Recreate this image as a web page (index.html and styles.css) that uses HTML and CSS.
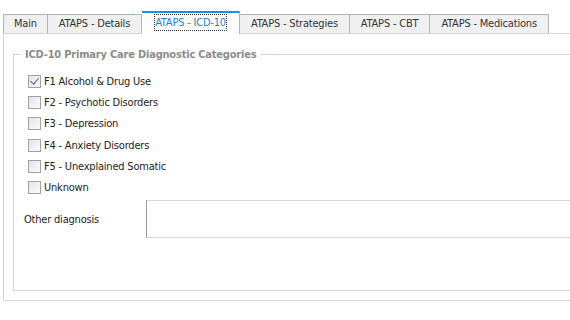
FILE: index.html
```html
<!DOCTYPE html>
<html lang="en">
<head>
    <meta charset="UTF-8">
    <title>ATAPS - ICD-10</title>
    <link rel="stylesheet" href="styles.css">
</head>
<body>
    <div class="tabs">
        <div class="tab">Main</div>
        <div class="tab">ATAPS - Details</div>
        <div class="tab active"><span class="focus">ATAPS - ICD-10</span></div>
        <div class="tab">ATAPS - Strategies</div>
        <div class="tab">ATAPS - CBT</div>
        <div class="tab">ATAPS - Medications</div>
    </div>

    <div class="panel">
        <fieldset class="group">
            <legend>ICD-10 Primary Care Diagnostic Categories</legend>

            <div class="checks">
                <label class="check"><input type="checkbox" checked> F1 Alcohol &amp; Drug Use</label>
                <label class="check"><input type="checkbox"> F2 - Psychotic Disorders</label>
                <label class="check"><input type="checkbox"> F3 - Depression</label>
                <label class="check"><input type="checkbox"> F4 - Anxiety Disorders</label>
                <label class="check"><input type="checkbox"> F5 - Unexplained Somatic</label>
                <label class="check"><input type="checkbox"> Unknown</label>
            </div>

            <div class="other">
                <label class="other-label">Other diagnosis</label>
                <textarea class="other-input"></textarea>
            </div>
        </fieldset>
    </div>
</body>
</html>
```

FILE: styles.css
```css
/* Old WinForms look: Tahoma-ish small text */
body {
    font-family: "DejaVu Sans Condensed", "DejaVu Sans", sans-serif;
    font-size: 11px;
    letter-spacing: -0.2px;
    color: #222;
    background-color: #ffffff;
    margin: 0;
    padding: 0;
    width: 570px;
    height: 320px;
    overflow: hidden;
}

.tabs {
    display: flex;
    align-items: flex-end;
    padding-left: 3px;
    margin-top: 10px;
    height: 23px;
}

.tab {
    height: 18px;
    line-height: 18px;
    padding: 0 11px;
    background-color: #f0f0f0;
    border: 1px solid #b4b4b4;
    border-bottom: none;
    border-left: none;
    color: #333;
    white-space: nowrap;
}

.tab:first-child {
    padding: 0 10px;
    border-left: 1px solid #b4b4b4;
}

.tab.active {
    height: 21px;
    line-height: 19px;
    padding: 0 12px;
    background-color: #ffffff;
    border-top: 2px solid #1e90e6;
    color: #1a84d8;
    margin-bottom: -1px;
    position: relative;
}

.focus {
    border: 1px dotted #333;
    padding: 1px 0;
}

.panel {
    border: 1px solid #d4d4d4;
    border-right: none;
    margin-left: 3px;
    height: 268px;
    padding: 14px 0 0 9px;
    box-sizing: border-box;
}

.group {
    margin: 0;
    border: 1px solid #d4d4d4;
    border-right: none;
    height: 243px;
    box-sizing: border-box;
    padding: 10px 0 0 14px;
}

.group legend {
    font-weight: bold;
    color: #8c8c8c;
    padding: 0 4px;
    margin-left: -7px;
}

.checks {
    display: flex;
    flex-direction: column;
}

.check {
    display: flex;
    align-items: center;
    height: 21.2px;
    gap: 3px;
}

.check input {
    appearance: none;
    margin: 0;
    width: 13px;
    height: 13px;
    border: 1px solid #a2a2a2;
    background: linear-gradient(135deg, #e4e4e4, #fafafa);
    box-sizing: border-box;
    position: relative;
}

.check input:checked::after {
    content: "";
    position: absolute;
    left: 3px;
    top: 0px;
    width: 4px;
    height: 7px;
    border: solid #666;
    border-width: 0 1.5px 1.5px 0;
    transform: rotate(40deg);
}

.other {
    display: flex;
    align-items: center;
    margin-top: 2px;
    margin-left: -4px;
}

.other-label {
    width: 122px;
}

.other-input {
    flex: 1;
    height: 38px;
    margin: 0;
    padding: 0;
    border: 1px solid #d6d6d6;
    border-left-color: #9a9a9a;
    border-right: none;
    resize: none;
    box-sizing: border-box;
}
```
